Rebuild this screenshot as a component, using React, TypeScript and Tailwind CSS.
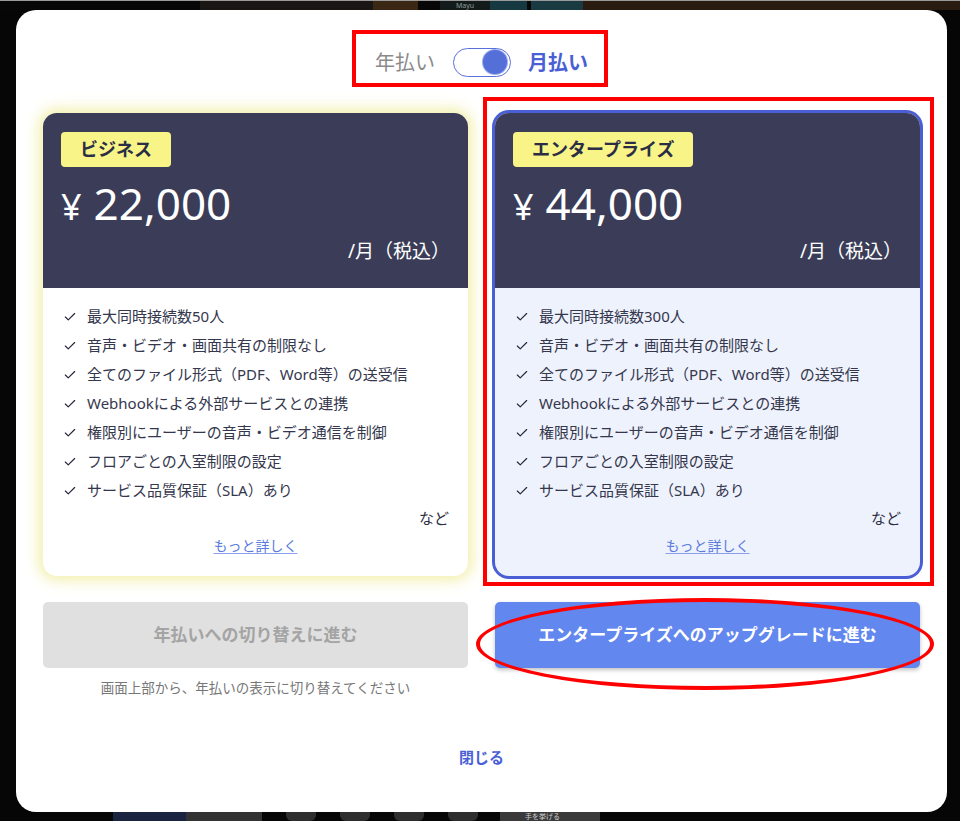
import { Check } from "lucide-react";

const features = [
  "最大同時接続数50人",
  "音声・ビデオ・画面共有の制限なし",
  "全てのファイル形式（PDF、Word等）の送受信",
  "Webhookによる外部サービスとの連携",
  "権限別にユーザーの音声・ビデオ通信を制御",
  "フロアごとの入室制限の設定",
  "サービス品質保証（SLA）あり",
];

type PlanProps = {
  name: string;
  price: string;
  seats: string;
  selected?: boolean;
};

const PlanCard = ({ name, price, seats, selected }: PlanProps) => {
  const items = [...features];
  items[0] = `最大同時接続数${seats}人`;
  return (
    <div
      className={
        selected
          ? "rounded-[14px] overflow-hidden ring-[3px] ring-[#4a5fd6] bg-[#eef2fc]"
          : "rounded-[14px] overflow-hidden bg-white shadow-[0_0_14px_4px_rgba(232,228,110,0.6)]"
      }
    >
      <div className="h-[175px] bg-[#3b3d58] pt-[19px] px-[18px] flex flex-col">
        <div className="self-start h-[35px] px-[19px] rounded-[4px] bg-[#f8f488] text-[#2b2d45] text-[18px] font-bold flex items-center">
          {name}
        </div>
        <div className="mt-[14px] flex items-baseline text-white leading-none">
          <span className="text-[36px] mr-[12px]">¥</span>
          <span className="text-[44px]">{price}</span>
        </div>
        <div className="mt-[13px] text-right text-white text-[19px] leading-[27px]">/月（税込）</div>
      </div>
      <div className="pt-[14px] pb-[20px]">
        <ul className="px-[20px]">
          {items.map((t) => (
            <li key={t} className="flex items-center gap-[10px] text-[15px] leading-[29px] text-[#35374d]">
              <Check size={14} strokeWidth={2} className="text-[#23253a] shrink-0" />
              <span>{t}</span>
            </li>
          ))}
        </ul>
        <div className="pr-[19px] text-right text-[15px] leading-[26px] text-[#2b2d42]">など</div>
        <div className="mt-[5px] text-center text-[14px] leading-[20px]">
          <a className="text-[#5b7be0] underline underline-offset-2 decoration-[#8aa0ea]">もっと詳しく</a>
        </div>
      </div>
    </div>
  );
};

const App = () => {
  return (
    <div
      className="w-[960px] h-[821px] bg-[#060606] flex flex-col overflow-hidden"
      style={{ fontFamily: '"Noto Sans", "Noto Sans CJK JP", sans-serif' }}
    >
      <div className="h-[10px] border-t border-[#9a9a9a] flex shrink-0">
        <div className="w-[200px] bg-[#070707]" />
        <div className="w-[173px] bg-[#191613]" />
        <div className="w-[45px] bg-[#3a2814]" />
        <div className="w-[22px] bg-[#070707]" />
        <div className="w-[50px] bg-[#131a1a] text-[7px] leading-[9px] text-[#8a9a9a] text-center">Mayu</div>
        <div className="w-[37px] bg-[#163840]" />
        <div className="w-[4px] bg-[#070707]" />
        <div className="w-[52px] bg-[#183a40]" />
        <div className="flex-1 bg-[#2a1b10]" />
      </div>

      <div className="relative ml-[16px] w-[931px] h-[802px] shrink-0 bg-white rounded-[20px] px-[27px] pt-[37px]">
        <div className="flex items-center justify-center h-[30px]">
          <span className="text-[20px] text-[#8a8a8a]" style={{ fontFamily: '"Noto Sans CJK JP", sans-serif' }}>年払い</span>
          <div className="ml-[18px] w-[58px] h-[29px] rounded-full border-[1.5px] border-[#5a70dc] bg-white flex items-center justify-end pr-[3px]">
            <div className="w-[24px] h-[24px] rounded-full bg-[#5470d8] ring-1 ring-[#9aaaf0]" />
          </div>
          <span className="ml-[17px] text-[20px] font-bold text-[#4a5fd6]" style={{ fontFamily: '"Noto Sans CJK JP", sans-serif' }}>月払い</span>
        </div>

        <div className="mt-[36px] grid grid-cols-2 gap-[27px]">
          <PlanCard name="ビジネス" price="22,000" seats="50" />
          <PlanCard name="エンタープライズ" price="44,000" seats="300" selected />
        </div>

        <div className="mt-[26px] grid grid-cols-2 gap-[27px]">
          <div className="flex flex-col items-center">
            <button className="w-full h-[66px] rounded-[5px] bg-[#e0e0e0] text-[#a4a4a4] text-[17px] font-bold">
              年払いへの切り替えに進む
            </button>
            <p className="mt-[10px] text-[13.5px] leading-[20px] text-[#777777]">画面上部から、年払いの表示に切り替えてください</p>
          </div>
          <div>
            <button className="w-full h-[66px] rounded-[5px] bg-[#6287ee] text-white text-[17px] font-bold shadow-[0_2px_4px_rgba(0,0,0,0.25)]">
              エンタープライズへのアップグレードに進む
            </button>
          </div>
        </div>

        <div className="mt-[47px] text-center">
          <button className="text-[15px] leading-[20px] font-bold text-[#4a5fd6]">閉じる</button>
        </div>

        {/* annotation marks */}
        <div className="absolute left-[336px] top-[20px] w-[256px] h-[57px] border-4 border-[#ff0000]" />
        <div className="absolute left-[467px] top-[87px] w-[451px] h-[489px] border-4 border-[#ff0000]" />
        <div className="absolute left-[460px] top-[588px] w-[458px] h-[92px] border-4 border-[#ff0000] rounded-[50%]" />
      </div>

      <div className="h-[9px] flex shrink-0">
        <div className="w-[113px] bg-[#060606]" />
        <div className="w-[73px] bg-[#1a2440]" />
        <div className="w-[76px] bg-[#333333]" />
        <div className="w-[24px] bg-[#060606]" />
        <div className="w-[30px] bg-[#2e2e2e] rounded-b-[6px]" />
        <div className="w-[24px] bg-[#060606]" />
        <div className="w-[30px] bg-[#2e2e2e] rounded-b-[6px]" />
        <div className="w-[24px] bg-[#060606]" />
        <div className="w-[30px] bg-[#2e2e2e] rounded-b-[6px]" />
        <div className="w-[24px] bg-[#060606]" />
        <div className="w-[30px] bg-[#2e2e2e] rounded-b-[6px]" />
        <div className="w-[22px] bg-[#060606]" />
        <div className="w-[100px] bg-[#3a3a3a] text-[7px] leading-[9px] text-[#cccccc] pl-[25px]">手を挙げる</div>
        <div className="flex-1 bg-[#060606]" />
      </div>
    </div>
  );
};

export default App;
